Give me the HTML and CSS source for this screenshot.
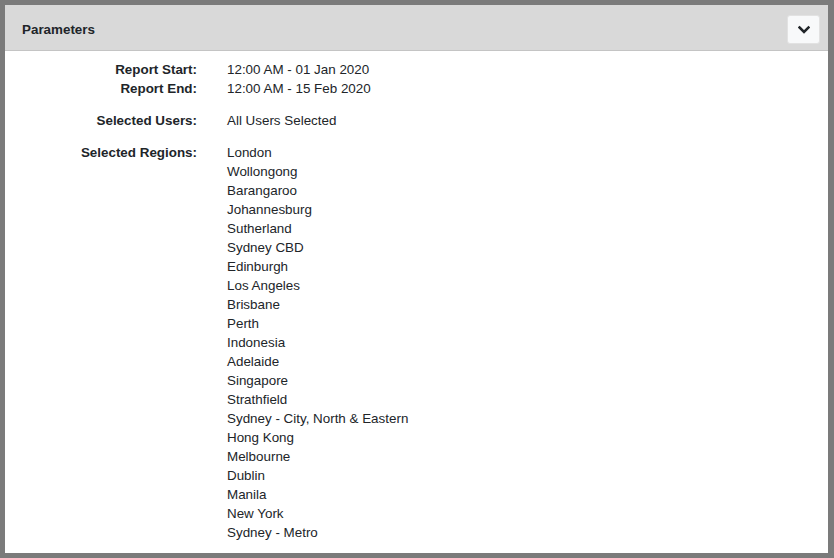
FILE: index.html
```html
<!DOCTYPE html>
<html lang="en">

<head>
    <meta charset="UTF-8">
    <meta name="viewport" content="width=device-width, initial-scale=1.0">
    <title>Parameters</title>
    <link rel="stylesheet" href="styles.css">
</head>

<body>
    <div class="panel">
        <div class="panel-header">
            <span class="panel-title">Parameters</span>
            <button class="toggle-btn" aria-label="Collapse">
                <svg width="12" height="10" viewBox="0 0 12 10">
                    <path d="M1.5 2.5 L6 7 L10.5 2.5" fill="none" stroke="#212529" stroke-width="2.6" stroke-linecap="square" />
                </svg>
            </button>
        </div>
        <div class="panel-body">
            <div class="params">
                <div class="label">Report Start:</div>
                <div class="value">12:00 AM - 01 Jan 2020</div>
                <div class="label">Report End:</div>
                <div class="value">12:00 AM - 15 Feb 2020</div>

                <div class="label spaced">Selected Users:</div>
                <div class="value spaced">All Users Selected</div>

                <div class="label spaced">Selected Regions:</div>
                <ul class="value spaced region-list">
                    <li>London</li>
                    <li>Wollongong</li>
                    <li>Barangaroo</li>
                    <li>Johannesburg</li>
                    <li>Sutherland</li>
                    <li>Sydney CBD</li>
                    <li>Edinburgh</li>
                    <li>Los Angeles</li>
                    <li>Brisbane</li>
                    <li>Perth</li>
                    <li>Indonesia</li>
                    <li>Adelaide</li>
                    <li>Singapore</li>
                    <li>Strathfield</li>
                    <li>Sydney - City, North &amp; Eastern</li>
                    <li>Hong Kong</li>
                    <li>Melbourne</li>
                    <li>Dublin</li>
                    <li>Manila</li>
                    <li>New York</li>
                    <li>Sydney - Metro</li>
                </ul>
            </div>
        </div>
    </div>
</body>

</html>
```

FILE: styles.css
```css
html,
body {
    height: 100%;
}

body {
    margin: 0;
    padding: 5px 6px 5px 5px;
    box-sizing: border-box;
    background-color: #7b7b7b;
    font-family: "Liberation Sans", Arial, sans-serif;
    font-size: 13.4px;
    color: #212529;
}

.panel {
    height: 100%;
    background-color: #fff;
    display: flex;
    flex-direction: column;
}

.panel-header {
    display: flex;
    justify-content: space-between;
    align-items: center;
    height: 41px;
    padding: 4px 8px 0 17px;
    background-color: #d9d9d9;
    border-bottom: 1px solid #c4c4c4;
}

.panel-title {
    font-weight: bold;
}

.toggle-btn {
    display: flex;
    align-items: center;
    justify-content: center;
    width: 33px;
    height: 29px;
    padding: 0;
    background-color: #f8f9fa;
    border: 1px solid #e2e2e2;
    border-radius: 3px;
    cursor: pointer;
}

.panel-body {
    padding: 9px 0 11px 0;
}

.params {
    display: grid;
    grid-template-columns: 192px 1fr;
    column-gap: 30px;
    line-height: 19px;
}

.label {
    font-weight: bold;
    text-align: right;
}

.spaced {
    margin-top: 13px;
}

.region-list {
    list-style: none;
    padding: 0;
    margin-bottom: 0;
}
```
